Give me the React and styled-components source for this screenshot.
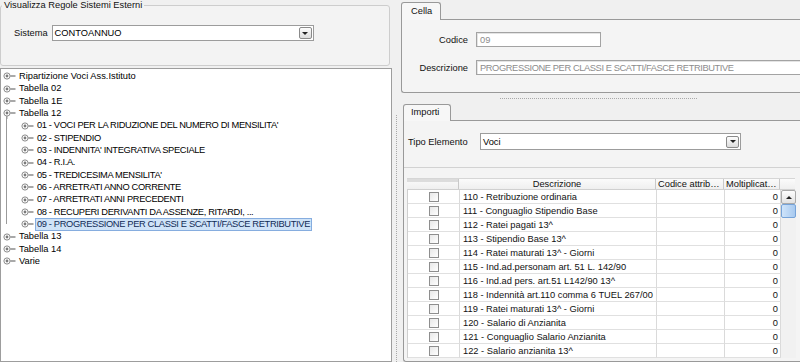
import React from 'react';
import styled, { createGlobalStyle } from 'styled-components';

const Global = createGlobalStyle`
  html, body { margin: 0; padding: 0; background: #f0f0f0; }
  body { font-family: "Liberation Sans", Arial, sans-serif; font-size: 9.3px; color: #000; }
  * { box-sizing: border-box; }
`;

const Window = styled.div`
  width: 800px;
  height: 362px;
  overflow: hidden;
  display: flex;
  background: #f0f0f0;
`;

const LeftPane = styled.div`
  width: 392px;
  flex: none;
  display: flex;
  flex-direction: column;
`;

const GroupBox = styled.fieldset`
  margin: 0 2px 0 0;
  padding: 0;
  height: 66px;
  min-width: 0;
  border: 1px solid #cdcdcd;
  border-radius: 3px;
  background: #f3f3f3;
`;

const Legend = styled.legend`
  margin-left: 1px;
  padding: 0 2px;
  line-height: 10px;
  color: #111;
`;

const FieldRow = styled.div`
  display: flex;
  align-items: center;
  gap: ${p => p.$gap || 4}px;
  margin-top: ${p => p.$top || 0}px;
  padding-left: ${p => p.$left || 0}px;
`;

const Label = styled.span`
  flex: none;
  width: ${p => (p.$w ? `${p.$w}px` : 'auto')};
  text-align: ${p => p.$align || 'left'};
  color: #111;
`;

const Select = styled.div`
  position: relative;
  width: ${p => p.$w}px;
  height: ${p => p.$h}px;
  background: #fff;
  border: 1px solid #9c9c9c;
  display: flex;
  align-items: center;
  padding-left: 2px;
`;

const DropButton = styled.span`
  position: absolute;
  right: 1px;
  top: 50%;
  transform: translateY(-50%);
  width: 13px;
  height: 12px;
  border: 1px solid #8a8a8a;
  border-radius: 2px;
  background: linear-gradient(#fdfdfd, #dcdcdc);
  display: flex;
  align-items: center;
  justify-content: center;
`;

const Arrow = styled.span`
  width: 0;
  height: 0;
  border-left: 3px solid transparent;
  border-right: 3px solid transparent;
  border-${p => (p.$up ? 'bottom' : 'top')}: 3px solid #222;
`;

const Tree = styled.div`
  flex: 1;
  margin-top: 2px;
  background: #fff;
  border: 1px solid #9d9d9d;
  padding-top: 1px;
`;

const TreeRow = styled.div`
  height: 12.35px;
  display: flex;
  align-items: center;
  padding-left: ${p => p.$indent}px;
  white-space: nowrap;
`;

const TreeText = styled.span`
  line-height: 10.5px;
  padding: 0 1px;
  border: 1px solid ${p => (p.$sel ? '#86addf' : 'transparent')};
  background: ${p => (p.$sel ? '#cfe3f8' : 'transparent')};
  color: ${p => (p.$sel ? '#102a55' : '#000')};
  letter-spacing: ${p => (p.$caps ? '-0.35px' : '0')};
`;

const Children = styled.div`
  position: relative;
  &::before {
    content: '';
    position: absolute;
    left: 5px;
    top: -3px;
    bottom: 6px;
    border-left: 1px solid #9a9a9a;
  }
`;

const VSplitter = styled.div`
  width: 9px;
  flex: none;
  display: flex;
  justify-content: center;
  padding-top: 115px;
`;

const VGrip = styled.div`
  width: 1px;
  background: repeating-linear-gradient(to bottom, #a8a8a8 0 1px, transparent 1px 2px);
`;

const RightPane = styled.div`
  width: 410px;
  flex: none;
  display: flex;
  flex-direction: column;
`;

const TabBlock = styled.div`
  display: flex;
  flex-direction: column;
  margin-top: ${p => p.$top || 0}px;
  margin-left: ${p => p.$left || 0}px;
  flex: ${p => (p.$grow ? 1 : 'none')};
`;

const Tab = styled.div`
  align-self: flex-start;
  width: ${p => p.$w}px;
  height: ${p => p.$h}px;
  padding-left: ${p => p.$pad}px;
  line-height: ${p => p.$h - 2}px;
  border: 1px solid #999;
  border-bottom: none;
  border-radius: 3px 3px 0 0;
  background: #f7f7f7;
  margin-bottom: -1px;
  position: relative;
  z-index: 1;
  color: #111;
`;

const TabPanel = styled.div`
  height: ${p => (p.$h ? `${p.$h}px` : 'auto')};
  flex: ${p => (p.$h ? 'none' : 1)};
  border: 1px solid #999;
  border-right: none;
  border-radius: 0 0 0 3px;
  background: #f4f4f4;
  display: flex;
  flex-direction: column;
`;

const CellGrid = styled.div`
  display: grid;
  grid-template-columns: 66px auto;
  column-gap: 8px;
  row-gap: 13px;
  align-items: center;
  padding-top: 12px;
`;

const TextBox = styled.div`
  width: ${p => p.$w}px;
  height: 15px;
  background: #fff;
  border: 1px solid #a3a3a3;
  box-shadow: inset 1px 1px 0 #e4e4e4;
  color: #8c8c8c;
  padding-left: 3px;
  display: flex;
  align-items: center;
  white-space: nowrap;
  letter-spacing: ${p => (p.$caps ? '-0.4px' : '0')};
`;

const HSplitter = styled.div`
  height: 11px;
  flex: none;
  display: flex;
  align-items: center;
  padding-left: 99px;
`;

const HGrip = styled.div`
  width: 197px;
  height: 1px;
  background: repeating-linear-gradient(to right, #a8a8a8 0 1px, transparent 1px 2px);
`;

const FormArea = styled.div`
  height: 47px;
  flex: none;
  padding-top: 12px;
  border-bottom: 1px solid #d2d2d2;
`;

const TableFrame = styled.div`
  margin: 10px 0 0 3px;
  width: 388px;
  display: flex;
  flex-direction: column;
`;

const HeaderRow = styled.div`
  display: grid;
  grid-template-columns: 52px 197px 68px 56px 15px;
  height: 12px;
  border-top: 1px solid #d6d6d6;
  background: linear-gradient(#fbfbfb, #efefef);
  border-bottom: 1px solid #d0d0d0;
`;

const HeaderCell = styled.div`
  border-right: 1px solid ${p => (p.$last ? 'transparent' : '#c9c9c9')};
  text-align: ${p => p.$align || 'left'};
  padding-left: ${p => (p.$align === 'center' ? 0 : 2)}px;
  line-height: 10px;
  white-space: nowrap;
  overflow: hidden;
  color: #111;
  background: ${p => (p.$first ? 'linear-gradient(#dcdcdc 0 3px, transparent 3px)' : 'none')};
`;

const Body = styled.div`
  display: flex;
`;

const Rows = styled.div`
  display: grid;
  grid-template-columns: 52px 197px 68px 56px;
  grid-auto-rows: 14px;
  background: #fff;
  border-left: 1px solid #cfcfcf;
`;

const Cell = styled.div`
  border-bottom: 1px solid #e0e0e0;
  border-right: 1px solid #dadada;
  display: flex;
  align-items: center;
  justify-content: ${p => p.$justify || 'flex-start'};
  padding: 0 ${p => (p.$justify === 'flex-end' ? 2 : 0)}px 0 ${p => (p.$justify === 'flex-start' || !p.$justify ? 3 : 0)}px;
  white-space: nowrap;
  overflow: hidden;
  color: #111;
`;

const CheckBox = styled.span`
  width: 10px;
  height: 10px;
  border: 1px solid #8e8e8e;
  background: linear-gradient(135deg, #e8e8e8, #ffffff);
`;

const ScrollBar = styled.div`
  width: 15px;
  flex: none;
  background: #f1f1f1;
  display: flex;
  flex-direction: column;
`;

const ScrollButton = styled.div`
  height: 14px;
  border: 1px solid #a9a9a9;
  border-radius: 2px;
  background: linear-gradient(#fdfdfd, #e2e2e2);
  display: flex;
  align-items: center;
  justify-content: center;
`;

const Thumb = styled.div`
  height: 14px;
  border: 1px solid #76a3d8;
  border-radius: 2px;
  background: linear-gradient(90deg, #cfe4fa, #a7c9ef);
`;

function NodeIcon({ open }) {
  return (
    <svg width="14" height="12" viewBox="0 0 14 12" style={{ flex: 'none' }}>
      <line x1="7.3" y1="6" x2="12.5" y2="6" stroke="#6f6f6f" strokeWidth="1.2" />
      {open && <line x1="4" y1="9" x2="4" y2="12" stroke="#9a9a9a" strokeWidth="1" />}
      <circle cx="4" cy="6" r="3.1" fill="#fff" stroke="#8b8b8b" strokeWidth="1" />
      <circle cx="4" cy="6" r="1.4" fill="#7a7a7a" />
    </svg>
  );
}

const children = [
  "01 - VOCI PER LA RIDUZIONE DEL NUMERO DI MENSILITA'",
  '02 - STIPENDIO',
  "03 - INDENNITA' INTEGRATIVA SPECIALE",
  '04 - R.I.A.',
  "05 - TREDICESIMA MENSILITA'",
  '06 - ARRETRATI ANNO CORRENTE',
  '07 - ARRETRATI ANNI PRECEDENTI',
  '08 - RECUPERI DERIVANTI DA ASSENZE, RITARDI, ...',
  '09 - PROGRESSIONE PER CLASSI E SCATTI/FASCE RETRIBUTIVE',
];

const voci = [
  '110 - Retribuzione ordinaria',
  '111 - Conguaglio Stipendio Base',
  '112 - Ratei pagati 13^',
  '113 - Stipendio Base 13^',
  '114 - Ratei maturati 13^ - Giorni',
  '115 - Ind.ad.personam art. 51 L. 142/90',
  '116 - Ind.ad pers. art.51 L142/90 13^',
  '118 - Indennità art.110 comma 6 TUEL 267/00',
  '119 - Ratei maturati 13^ - Giorni',
  '120 - Salario di Anzianita',
  '121 - Conguaglio Salario Anzianita',
  '122 - Salario anzianita 13^',
];

function TopNode({ label, open }) {
  return (
    <TreeRow $indent={2}>
      <NodeIcon open={open} />
      <TreeText>{label}</TreeText>
    </TreeRow>
  );
}

export default function App() {
  return (
    <>
      <Global />
      <Window>
        <LeftPane>
          <GroupBox>
            <Legend>Visualizza Regole Sistemi Esterni</Legend>
            <FieldRow $top={15} $left={13} $gap={4}>
              <Label>Sistema</Label>
              <Select $w={262} $h={16}>
                CONTOANNUO
                <DropButton><Arrow /></DropButton>
              </Select>
            </FieldRow>
          </GroupBox>
          <Tree>
            <TopNode label="Ripartizione Voci Ass.Istituto" />
            <TopNode label="Tabella 02" />
            <TopNode label="Tabella 1E" />
            <TopNode label="Tabella 12" open />
            <Children>
              {children.map((c, i) => (
                <TreeRow key={c} $indent={20}>
                  <NodeIcon />
                  <TreeText $caps $sel={i === children.length - 1}>{c}</TreeText>
                </TreeRow>
              ))}
            </Children>
            <TopNode label="Tabella 13" />
            <TopNode label="Tabella 14" />
            <TopNode label="Varie" />
          </Tree>
        </LeftPane>

        <VSplitter><VGrip /></VSplitter>

        <RightPane>
          <TabBlock $top={2}>
            <Tab $w={40} $h={18} $pad={9}>Cella</Tab>
            <TabPanel $h={74}>
              <CellGrid>
                <Label $align="right">Codice</Label>
                <TextBox $w={125}>09</TextBox>
                <Label $align="right">Descrizione</Label>
                <TextBox $w={345} $caps>PROGRESSIONE PER CLASSI E SCATTI/FASCE RETRIBUTIVE</TextBox>
              </CellGrid>
            </TabPanel>
          </TabBlock>

          <HSplitter><HGrip /></HSplitter>

          <TabBlock $left={2} $grow>
            <Tab $w={48} $h={17} $pad={7}>Importi</Tab>
            <TabPanel>
              <FormArea>
                <FieldRow $left={4} $gap={0}>
                  <Label $w={68}>Tipo Elemento</Label>
                  <Select $w={261} $h={17}>
                    Voci
                    <DropButton><Arrow /></DropButton>
                  </Select>
                </FieldRow>
              </FormArea>
              <TableFrame>
                <HeaderRow>
                  <HeaderCell $first />
                  <HeaderCell $align="center">Descrizione</HeaderCell>
                  <HeaderCell>Codice attrib…</HeaderCell>
                  <HeaderCell>Moltiplicat…</HeaderCell>
                  <HeaderCell $last />
                </HeaderRow>
                <Body>
                  <Rows>
                    {voci.map(v => (
                      <React.Fragment key={v}>
                        <Cell $justify="center"><CheckBox /></Cell>
                        <Cell>{v}</Cell>
                        <Cell />
                        <Cell $justify="flex-end">0</Cell>
                      </React.Fragment>
                    ))}
                  </Rows>
                  <ScrollBar>
                    <ScrollButton><Arrow $up /></ScrollButton>
                    <Thumb />
                  </ScrollBar>
                </Body>
              </TableFrame>
            </TabPanel>
          </TabBlock>
        </RightPane>
      </Window>
    </>
  );
}
